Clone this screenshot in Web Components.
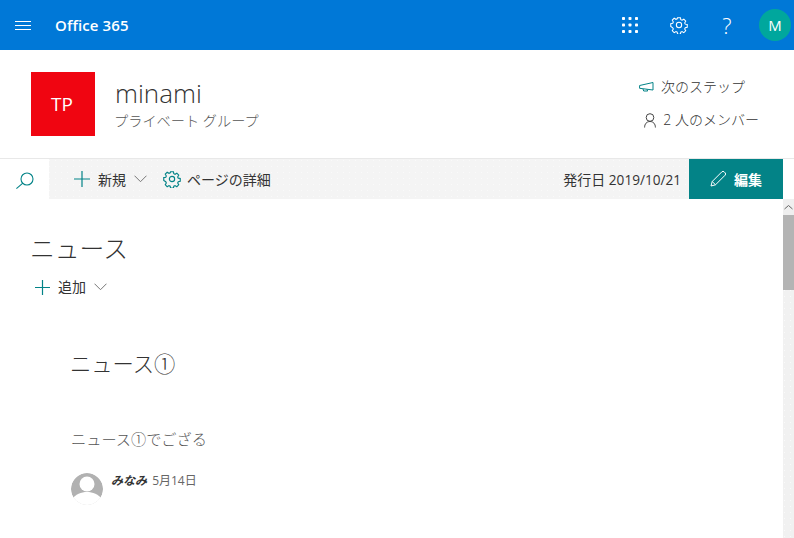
<!DOCTYPE html>
<html lang="ja"><head><meta charset="utf-8"><title>minami</title>
<style>
html,body{margin:0;height:538px;overflow:hidden;background:#fff}
body{font-family:"Open Sans","Noto Sans CJK JP",sans-serif;color:#333;display:flex;flex-direction:column}
</style></head><body>
<o-topbar></o-topbar>
<o-header></o-header>
<o-cmdbar></o-cmdbar>
<o-main>
  <o-news></o-news>
</o-main>
<script>
const FONT='"Open Sans","Noto Sans CJK JP",sans-serif';
const GEAR='M7 .8h3l.4 2.100 1.300.6 1.900-1.100 2 2-1.100 1.900.6 1.300 2.100.4v3l-2.100.4-.6 1.300 1.100 1.900-2 2-1.900-1.100-1.300.6-.4 2.100H7l-.4-2.100-1.300-.6-1.900 1.100-2-2 1.100-1.900-.6-1.300L-.2 10V7l2.100-.4.6-1.300L1.400 3.400l2-2 1.900 1.100 1.300-.6z';
const def=(n,html)=>customElements.define(n,class extends HTMLElement{constructor(){super();this.attachShadow({mode:'open'}).innerHTML=html}});
def('o-topbar',`<style>
:host{display:flex;align-items:center;height:50px;background:#0078d7;color:#fff;flex:none}
.b{width:16px;margin-left:15px;display:block}
.t{margin-left:24px;font:600 15px ${FONT};letter-spacing:.1px;flex:1}
.r{display:flex;align-items:center}
svg{display:block}
.m{width:32px;height:32px;border-radius:50%;background:#00a79d;display:flex;align-items:center;justify-content:center;font:400 15px ${FONT};margin-right:3px}
.q{font:300 22px ${FONT};width:16px;text-align:center;margin-right:24px}
</style>
<svg class="b" width="16" height="10" viewBox="0 0 16 10"><path d="M0 1.500h16M0 5.500h16M0 9.500h16" stroke="#fff" stroke-width="1"/></svg>
<div class="t">Office 365</div>
<div class="r">
<svg style="margin-right:32px" width="16" height="16" viewBox="0 0 16 16" fill="#fff"><rect x="0" y="0" width="3" height="3" rx=".8"/><rect x="6.500" y="0" width="3" height="3" rx=".8"/><rect x="13" y="0" width="3" height="3" rx=".8"/><rect x="0" y="6.500" width="3" height="3" rx=".8"/><rect x="6.500" y="6.500" width="3" height="3" rx=".8"/><rect x="13" y="6.500" width="3" height="3" rx=".8"/><rect x="0" y="13" width="3" height="3" rx=".8"/><rect x="6.500" y="13" width="3" height="3" rx=".8"/><rect x="13" y="13" width="3" height="3" rx=".8"/></svg>
<svg style="margin-right:31px" width="18" height="18" viewBox="-1 -1 19 19" fill="none" stroke="#fff" stroke-width="1.100"><circle cx="8.500" cy="8.500" r="2.800"/><path d="${GEAR}"/></svg>
<div class="q">?</div>
<div class="m">M</div>
</div>`);
def('o-header',`<style>
:host{display:flex;height:109px;box-sizing:border-box;padding:22px 35px 0 31px;background:#fff;flex:none;border-bottom:1px solid #e8e8e8}
.l{width:64px;height:64px;background:#f00511;color:#fff;font:400 19px ${FONT};display:flex;align-items:center;justify-content:center;padding-right:2px;box-sizing:border-box}
.i{margin-left:20px;flex:1}
.n{font:300 26px/34px ${FONT};color:#333;margin-top:4px}
.s{font:300 14.200px/20px ${FONT};color:#555;margin:1px 0 0 -1px}
.r{display:flex;flex-direction:column;align-items:flex-end;font:300 14px/20px ${FONT};color:#333;gap:13px;padding-top:5px}
.x{display:flex;align-items:center;gap:7px}
.x svg{display:block}
</style>
<div class="l">TP</div>
<div class="i"><div class="n">minami</div><div class="s">プライベート グループ</div></div>
<div class="r">
<div class="x" style="margin-right:14px"><svg width="15" height="12" viewBox="0 0 15 12" fill="none" stroke="#038387"><path d="M.6 4.500l13.400-3v7.500L.6 7.300zM4 8l.7 2h4l-.7-1.500"/></svg>次のステップ</div>
<div class="x"><svg width="12" height="15" viewBox="0 0 12 15" fill="none" stroke="#444"><circle cx="6" cy="4.500" r="3.800"/><path d="M.6 14.500c0-3.500 2-6 5.400-6s5.400 2.500 5.400 6"/></svg>2 人のメンバー</div>
</div>`);
def('o-cmdbar',`<style>
:host{display:flex;height:40px;box-sizing:border-box;flex:none;font:400 14px ${FONT};color:#333;padding-right:11px;align-items:stretch;background:linear-gradient(#fff,#fff) right/11px 100% no-repeat,radial-gradient(circle at 1.500px 1.500px,#fafafa .7px,transparent 1px) 0 0/6px 6px,#f4f4f4}
.s{width:49px;background:#fff;display:flex;align-items:center;justify-content:center}
.c{display:flex;align-items:center;padding-left:25px;flex:1}
.c svg{display:block}
.d{margin-right:8px}
.d span{font-size:13.600px}
.e{width:94px;background:#038387;color:#fff;font-weight:700;display:flex;align-items:center;justify-content:center;gap:8px}
.t{margin-left:8px}
.g{margin-left:8px;margin-right:16px}
svg{display:block}
</style>
<div class="s"><svg width="18" height="20" viewBox="0 0 18 20" fill="none" stroke="#038387" stroke-width="1.100"><circle cx="11" cy="10" r="6"/><path d="M6.800 14.200L.4 19.600"/></svg></div>
<div class="c">
<svg width="16" height="16" viewBox="0 0 16 16" stroke="#038387" stroke-width="1.200"><path d="M8 0v16M0 8h16"/></svg>
<span class="t">新規</span>
<svg class="g" width="13" height="8" viewBox="0 0 13 8" fill="none" stroke="#777"><path d="M.5.700l6 6 6-6"/></svg>
<svg width="18" height="18" viewBox="-1 -1 19 19" fill="none" stroke="#038387" stroke-width="1.200"><circle cx="8.500" cy="8.500" r="2.800"/><path d="${GEAR}"/></svg>
<span class="t" style="margin-left:6px">ページの詳細</span>
</div>
<div class="c" style="flex:none;padding:0"><div class="d">発行日 <span>2019/10/21</span></div></div>
<div class="e"><svg width="16" height="16" viewBox="0 0 16 16" fill="none" stroke="#fff"><path d="M1 15l1.200-4.500L11.800.9a1.700 1.700 0 0 1 2.400 0l.9.9a1.700 1.700 0 0 1 0 2.400L5.500 13.800zM2.200 10.500l3.300 3.300"/></svg>編集</div>`);
def('o-main',`<style>
:host{display:flex;flex:1;min-height:0}
.c{flex:1;min-width:0}
.sb{width:11px;background:radial-gradient(circle at 1.500px 1.500px,#fafafa .7px,transparent 1px) 0 0/6px 6px,#f1f1f1;display:flex;flex-direction:column}
.u{height:16px;display:flex;align-items:center;justify-content:center;background:#efefef}
.th{height:75px;background:#b4b4b4}
</style>
<div class="c"><slot></slot></div>
<div class="sb"><div class="u"><svg width="9" height="6" viewBox="0 0 9 6" fill="none" stroke="#666"><path d="M.5 5l4-3.500 4 3.500"/></svg></div><div class="th"></div></div>`);
def('o-news',`<style>
:host{display:block;padding:30px 0 0 31px;font-family:${FONT}}
h2{margin:0 0 0 -1px;font:300 24.800px/38px ${FONT};color:#333}
.a{display:flex;align-items:center;margin:10px 0 0 4px;font:400 14px/20px ${FONT};color:#333}
.a svg{display:block}
.art{padding:52px 0 0 40px}
h3{margin:0 0 0 -1px;font:300 21.300px/30px ${FONT};color:#333}
.p{margin-top:50px;font:300 15.200px/20px ${FONT};color:#555}
.m{display:flex;margin-top:24px;gap:8px}
.av{width:32px;height:32px;border-radius:50%;display:block}
.who{font:400 12px/16px ${FONT};color:#666}
b{font-weight:700;font-style:italic;color:#333;margin-right:2px}
</style>
<h2>ニュース</h2>
<div class="a"><svg width="15" height="15" viewBox="0 0 15 15" stroke="#038387" stroke-width="1.200"><path d="M7.500 0v15M0 7.500h15"/></svg><span style="margin:0 8px">追加</span><svg width="13" height="8" viewBox="0 0 13 8" fill="none" stroke="#777"><path d="M.5.700l6 6 6-6"/></svg></div>
<div class="art"><h3>ニュース①</h3>
<div class="p">ニュース①でござる</div>
<div class="m"><svg class="av" viewBox="0 0 32 32"><circle cx="16" cy="16" r="16" fill="#b1b1b1"/><circle cx="16" cy="11" r="7.500" fill="#fff"/><path d="M0 27C5 21 10 19 16 19C22 19 27 21 32 27V32H0Z" fill="#fff"/></svg>
<div class="who"><b>みなみ</b> 5月14日</div></div></div>`);
</script>
</body></html>
